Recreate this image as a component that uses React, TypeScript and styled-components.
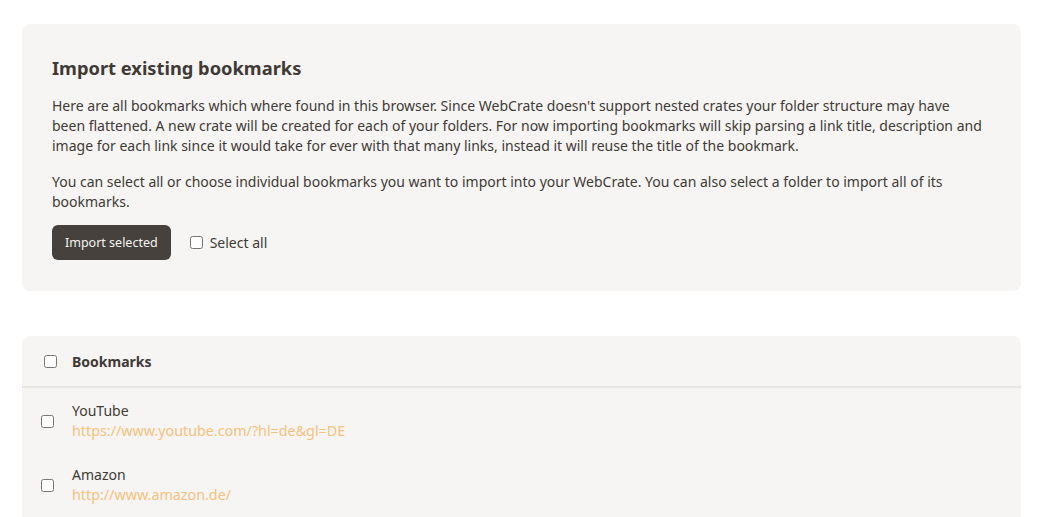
import React from "react";
import styled, { createGlobalStyle } from "styled-components";

const Global = createGlobalStyle`
  html, body { margin: 0; padding: 0; background: #ffffff; }
  body { font-family: "Noto Sans", "Open Sans", sans-serif; color: #3f3a36; }
  * { box-sizing: border-box; }
`;

const Page = styled.main`
  width: 999px;
  margin: 24px 0 0 22px;
  display: flex;
  flex-direction: column;
  gap: 45px;
`;

const Card = styled.section`
  background: #f6f5f3;
  border-radius: 8px;
  padding: 30px 38px 31px 30px;
`;

const Title = styled.h2`
  margin: 0 0 14px;
  font-size: 18.3px;
  font-weight: 700;
  line-height: 28px;
  color: #3f3a36;
`;

const Para = styled.p`
  margin: 0 0 16px;
  font-size: 14px;
  line-height: 20px;
  color: #3f3a36;
`;

const Actions = styled.div`
  display: flex;
  align-items: center;
  gap: 19px;
  margin-top: -3px;
`;

const Button = styled.button`
  height: 35px;
  padding: 0 13px;
  border: none;
  border-radius: 6px;
  background: #46413c;
  color: #f7f5f2;
  font-family: inherit;
  font-size: 12.5px;
  cursor: pointer;
`;

const CheckLabel = styled.label`
  display: flex;
  align-items: center;
  gap: 7px;
  font-size: 14px;
  color: #3f3a36;
`;

const Box = styled.input.attrs({ type: "checkbox" })`
  width: 13px;
  height: 13px;
  margin: 0;
`;

const ListCard = styled.section`
  background: #f6f5f3;
  border-radius: 8px 8px 0 0;
`;

const Header = styled.div`
  display: flex;
  align-items: center;
  gap: 15px;
  height: 52px;
  padding: 0 0 0 22px;
  border-bottom: 2px solid #e8e6e3;
  font-size: 14px;
  font-weight: 700;
`;

const List = styled.div`
  padding-top: 1px;
`;

const Row = styled.div`
  display: flex;
  align-items: center;
  gap: 18px;
  height: 64px;
  padding-left: 19px;
`;

const RowText = styled.div`
  display: flex;
  flex-direction: column;
`;

const RowTitle = styled.span`
  font-size: 14px;
  line-height: 20px;
  color: #3f3a36;
`;

const RowUrl = styled.a`
  font-size: 14.3px;
  line-height: 20px;
  color: #f5c27d;
  text-decoration: none;
`;

const bookmarks = [
  { title: "YouTube", url: "https://www.youtube.com/?hl=de&gl=DE" },
  { title: "Amazon", url: "http://www.amazon.de/" },
];

export default function App() {
  return (
    <>
      <Global />
      <Page>
        <Card>
          <Title>Import existing bookmarks</Title>
          <Para>
            Here are all bookmarks which where found in this browser. Since WebCrate doesn't support nested crates your folder structure may have been flattened. A new crate will be created for each of your folders. For now importing bookmarks will skip parsing a link title, description and image for each link since it would take for ever with that many links, instead it will reuse the title of the bookmark.
          </Para>
          <Para>
            You can select all or choose individual bookmarks you want to import into your WebCrate. You can also select a folder to import all of its bookmarks.
          </Para>
          <Actions>
            <Button>Import selected</Button>
            <CheckLabel>
              <Box />
              Select all
            </CheckLabel>
          </Actions>
        </Card>
        <ListCard>
          <Header>
            <Box />
            Bookmarks
          </Header>
          <List>
            {bookmarks.map((b) => (
              <Row key={b.title}>
                <Box />
                <RowText>
                  <RowTitle>{b.title}</RowTitle>
                  <RowUrl href={b.url}>{b.url}</RowUrl>
                </RowText>
              </Row>
            ))}
          </List>
        </ListCard>
      </Page>
    </>
  );
}
